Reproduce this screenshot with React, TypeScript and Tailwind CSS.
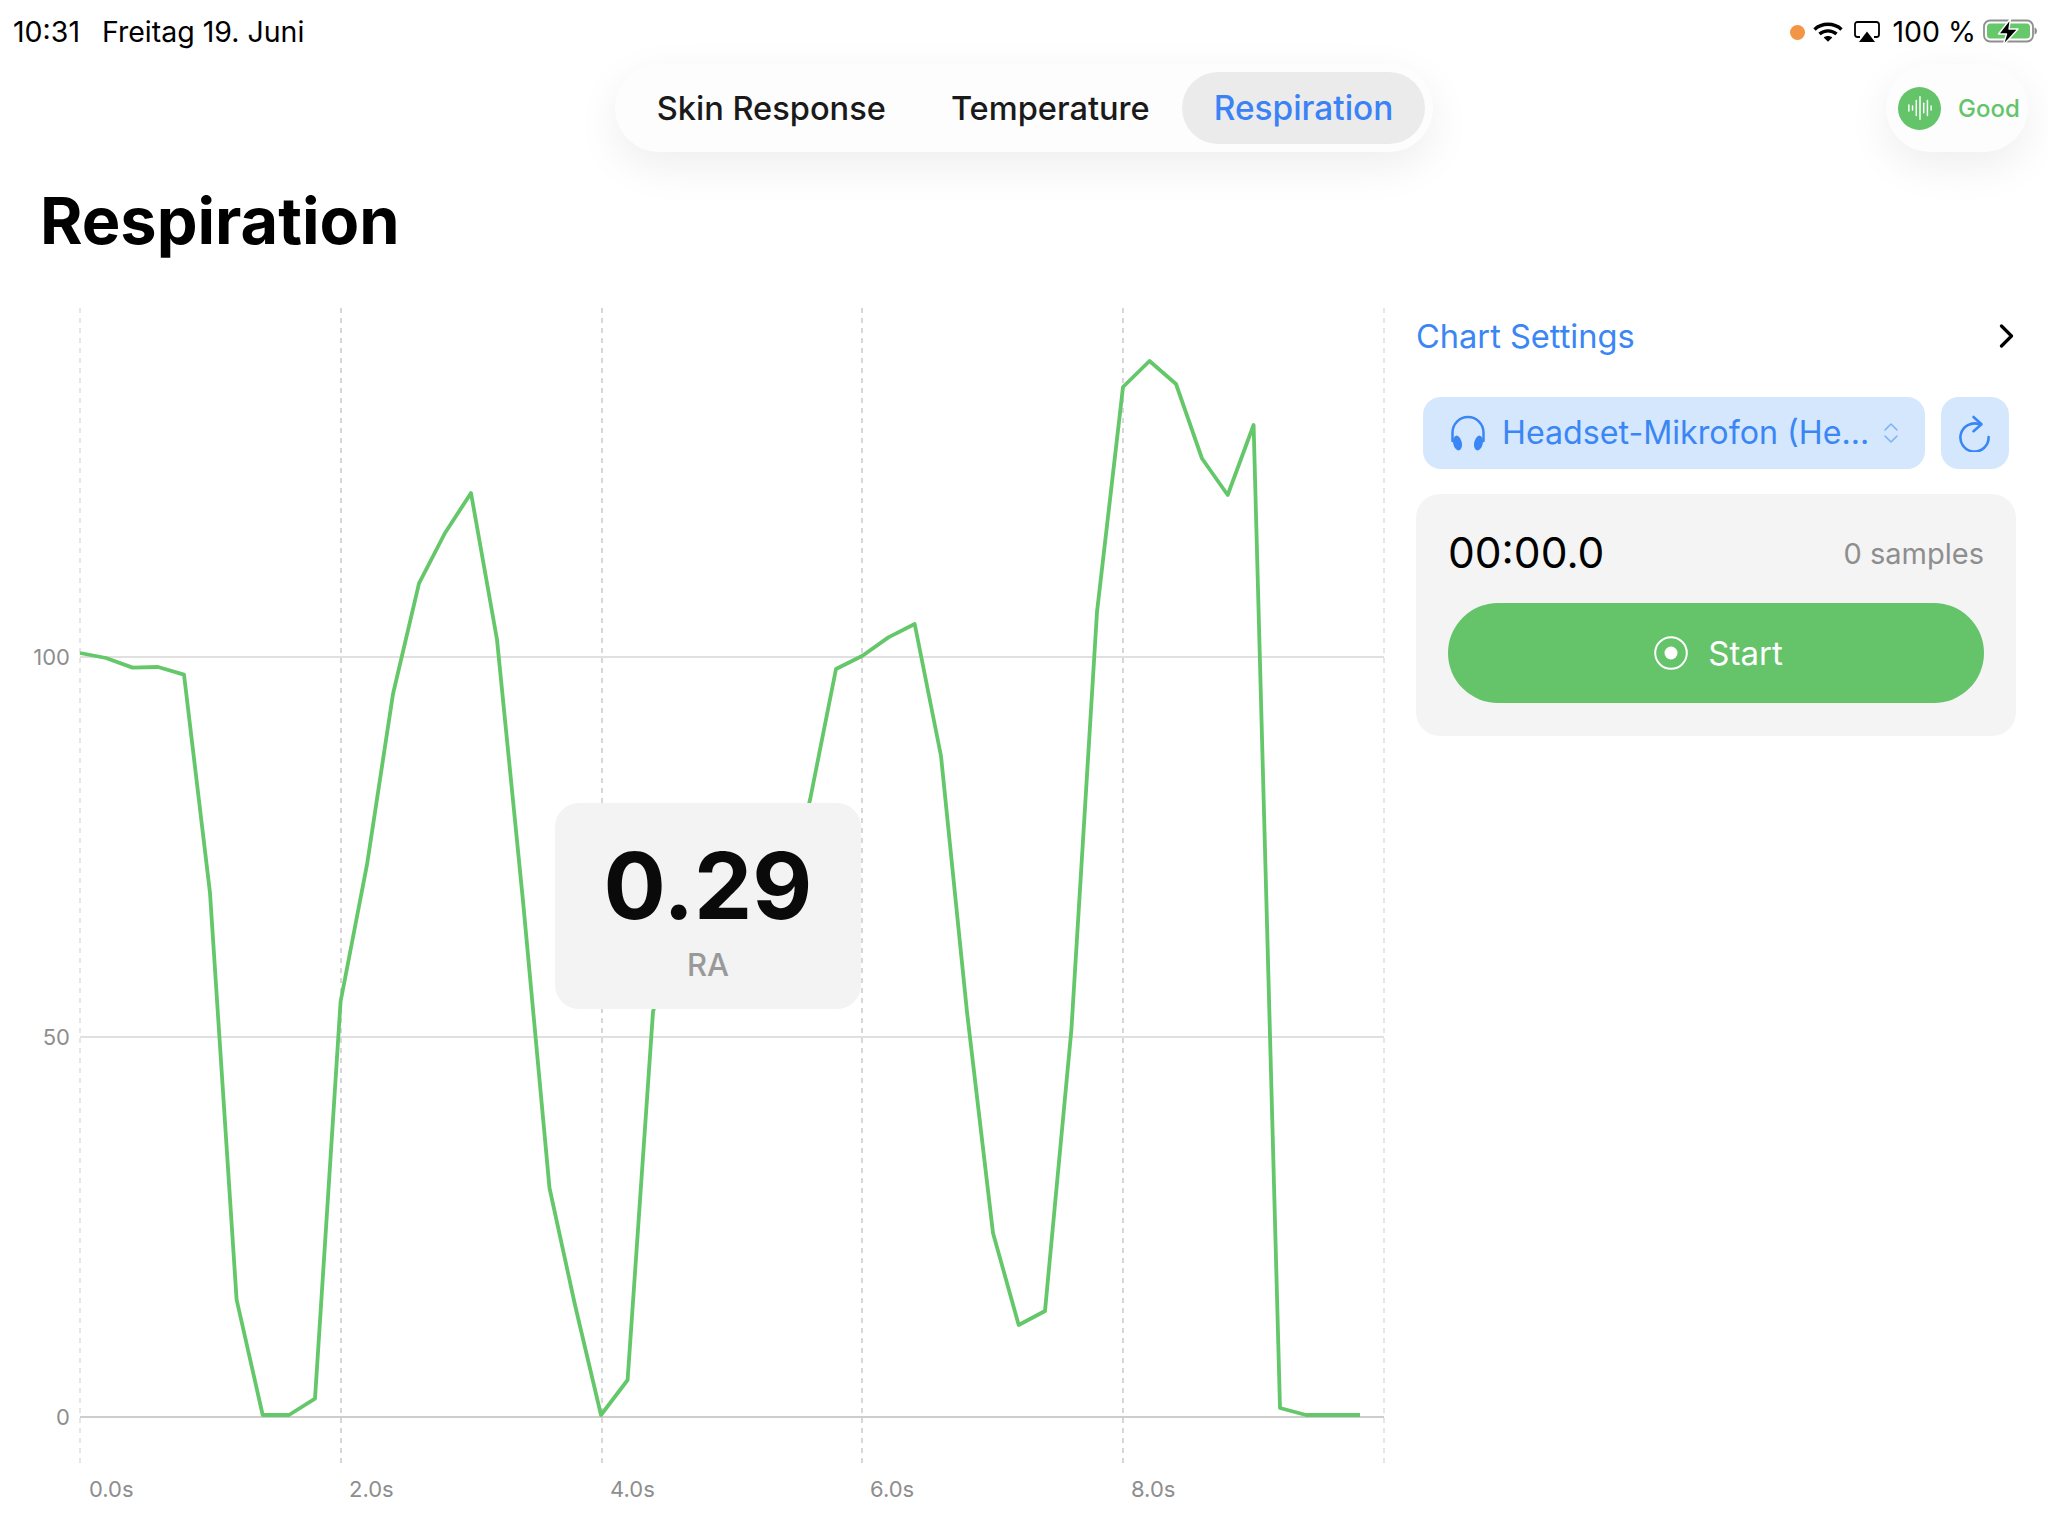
import React from "react";

const points: [number, number][] = [
  [80, 653], [106, 658], [132.6, 667.6], [158, 667], [184, 674.6], [210, 893], [236.6, 1299.6], [262.7, 1415], [289, 1415], [315, 1398.7],
  [340.6, 1001.5], [367, 864.7], [393, 694], [419, 583.4], [445, 533], [471, 493], [497, 639.5], [523, 901], [549.5, 1188], [575, 1305],
  [601, 1415], [627.6, 1380], [653, 1012], [680, 900], [706, 900], [732, 900], [758, 900], [784, 900], [810, 800], [836, 669],
  [862.5, 655.7], [888.4, 637.4], [914.7, 624], [941, 756], [967, 1012], [993, 1233], [1018.7, 1325], [1045, 1311], [1071.4, 1029.6], [1097, 612],
  [1123, 387], [1149.5, 361], [1176, 384], [1202, 458.5], [1227.7, 495], [1253.6, 425], [1280, 1408], [1306, 1415], [1332, 1415], [1360, 1415],
];

const verticals = [
  { x: 80, c: "#e0e0e0" },
  { x: 341, c: "#cdcdcd" },
  { x: 602, c: "#cdcdcd" },
  { x: 862, c: "#cdcdcd" },
  { x: 1123, c: "#cdcdcd" },
  { x: 1384, c: "#e0e0e0" },
];

const xLabels = [
  { x: 89, t: "0.0s" },
  { x: 349, t: "2.0s" },
  { x: 610, t: "4.0s" },
  { x: 870, t: "6.0s" },
  { x: 1131, t: "8.0s" },
];

function Chart() {
  return (
    <svg viewBox="0 308 1416 1228" className="block w-[1416px] h-[1228px]">
      {verticals.map((v) => (
        <line key={v.x} x1={v.x} x2={v.x} y1={308} y2={1467} stroke={v.c} strokeWidth={1.6} strokeDasharray="5 5" />
      ))}
      <line x1={80} x2={1384} y1={657} y2={657} stroke="#d6d6d6" strokeWidth={1.4} />
      <line x1={80} x2={1384} y1={1037} y2={1037} stroke="#d6d6d6" strokeWidth={1.4} />
      <line x1={80} x2={1384} y1={1417} y2={1417} stroke="#bdbdbd" strokeWidth={1.4} />
      <text x={70} y={665} textAnchor="end" fill="#8e8e8e" fontSize={22}>100</text>
      <text x={70} y={1045} textAnchor="end" fill="#8e8e8e" fontSize={22}>50</text>
      <text x={70} y={1425} textAnchor="end" fill="#8e8e8e" fontSize={22}>0</text>
      {xLabels.map((l) => (
        <text key={l.x} x={l.x} y={1497} fill="#8e8e8e" fontSize={22}>{l.t}</text>
      ))}
      <polyline
        points={points.map((p) => p.join(",")).join(" ")}
        fill="none"
        stroke="#64c76a"
        strokeWidth={3.8}
        strokeLinejoin="round"
      />
    </svg>
  );
}

function Wifi() {
  return (
    <svg viewBox="0 0 30 20" className="w-[30px] h-[20px]" fill="none" stroke="#000" strokeLinecap="butt">
      <path d="M1.500 7.400C9 .6 21 .6 28.500 7.400" strokeWidth={3.4} />
      <path d="M6.500 12c4.800-4.200 12.200-4.200 17 0" strokeWidth={3.4} />
      <path d="M15 19.800l-4.300-4.400c2.500-2 6.100-2 8.600 0z" fill="#000" stroke="none" />
    </svg>
  );
}

function Airplay() {
  return (
    <svg viewBox="0 0 26 22" className="w-[26px] h-[22px]" fill="none">
      <path d="M6 16H3.500A2.500 2.500 0 0 1 1 13.500v-10A2.500 2.500 0 0 1 3.500 1h19A2.500 2.500 0 0 1 25 3.500v10a2.500 2.500 0 0 1-2.500 2.500H20" stroke="#000" strokeWidth={1.8} />
      <path d="M13 10.500L21 21H5z" fill="#000" />
    </svg>
  );
}

function Battery() {
  return (
    <svg viewBox="0 0 56 28" className="w-[56px] h-[28px]" fill="none">
      <rect x="2" y="2.500" width="49" height="21" rx="6" stroke="#8f8f8f" strokeWidth={1.800} />
      <rect x="5" y="5.500" width="43" height="15" rx="3.500" fill="#66c76b" />
      <path d="M52.500 9.500c1.800.5 2.500 2 2.500 3.500s-.7 3-2.500 3.500z" fill="#8f8f8f" />
      <path d="M28.500 .8L16.500 16h8L21 27.500 36 11h-9z" fill="#000" stroke="#fff" strokeWidth={1.400} strokeLinejoin="round" />
    </svg>
  );
}

function Waveform() {
  const bars: [number, number][] = [[2, 8], [6, 6], [10, 18], [14, 26], [18, 12], [22, 18], [26, 6]];
  return (
    <svg viewBox="0 0 28 28" className="w-[26px] h-[26px]">
      {bars.map(([x, h]) => (
        <rect key={x} x={x - 0.8} y={14 - h / 2} width={1.6} height={h} rx={0.8} fill="#fff" />
      ))}
    </svg>
  );
}

function Headphones() {
  return (
    <svg viewBox="0 0 36 36" className="w-[36px] h-[36px]" fill="none">
      <path d="M2.500 26V17.500a15.500 15.500 0 0 1 31 0V26" stroke="#3a86f5" strokeWidth={2.500} strokeLinecap="round" />
      <ellipse cx="7.500" cy="28" rx="4.300" ry="7.500" transform="rotate(-12 7.500 28)" fill="#3a86f5" />
      <ellipse cx="28.500" cy="28" rx="4.300" ry="7.500" transform="rotate(12 28.500 28)" fill="#3a86f5" />
    </svg>
  );
}

function UpDown() {
  return (
    <svg viewBox="0 0 16 22" className="w-[16px] h-[22px]" fill="none" stroke="#7fb2f8" strokeWidth={1.600} strokeLinecap="round" strokeLinejoin="round">
      <path d="M2 8l6-6 6 6" />
      <path d="M2 14l6 6 6-6" />
    </svg>
  );
}

function Refresh() {
  return (
    <svg viewBox="0 0 32 38" className="w-[32px] h-[38px]" fill="none" stroke="#3a86f5" strokeWidth={2.600} strokeLinecap="round" strokeLinejoin="round">
      <path d="M20.500 10.300A14.100 14.100 0 1 0 29.600 23" />
      <path d="M14.500 3l8 7.200-8 7" />
    </svg>
  );
}

function Chevron() {
  return (
    <svg viewBox="0 0 15 24" className="w-[15px] h-[24px]" fill="none" stroke="#000" strokeWidth={3.200} strokeLinecap="round" strokeLinejoin="round">
      <path d="M2.500 2l10 10-10 10" />
    </svg>
  );
}

function RecordIcon() {
  return (
    <svg viewBox="0 0 34 34" className="w-[34px] h-[34px]" fill="none">
      <circle cx="17" cy="17" r="15.800" stroke="#fff" strokeWidth={2} />
      <circle cx="17" cy="17" r="6.500" fill="#fff" />
    </svg>
  );
}

export default function App() {
  return (
    <div className="relative flex h-[1536px] w-[2048px] flex-col overflow-hidden bg-white font-['Inter',sans-serif] text-black">
      {/* Status bar */}
      <div className="flex h-[64px] items-start justify-between pl-[13px] pr-[10px] pt-[14px]">
        <div className="flex gap-[22px] text-[28.5px] leading-[36px]">
          <span>10:31</span>
          <span>Freitag 19. Juni</span>
        </div>
        <div className="flex items-center">
          <span className="h-[15px] w-[15px] rounded-full bg-[#f29544]" />
          <span className="ml-[8px]"><Wifi /></span>
          <span className="ml-[11px]"><Airplay /></span>
          <span className="ml-[12px] text-[28.5px] leading-[36px]">100 %</span>
          <span className="ml-[6px]"><Battery /></span>
        </div>
      </div>

      {/* Navigation row */}
      <div className="grid h-[88px] grid-cols-[1fr_auto_1fr] items-center">
        <div />
        <div className="flex h-[88px] items-center rounded-[44px] bg-[#fdfdfd] pl-[42px] pr-[8px] shadow-[0_14px_44px_rgba(0,0,0,0.07)]">
          <span className="text-[32.6px] font-medium text-[#1a1a1a]">Skin Response</span>
          <span className="ml-[65px] text-[32.6px] font-medium text-[#1a1a1a]">Temperature</span>
          <span className="ml-[32px] flex h-[72px] items-center rounded-[36px] bg-[#ebebeb] px-[32px] text-[33.4px] font-medium text-[#3a82f6]">Respiration</span>
        </div>
        <div className="flex justify-end pr-[20px]">
          <div className="flex h-[88px] w-[142px] items-center gap-[17px] rounded-[44px] bg-[#fdfdfd] pl-[12px] shadow-[0_14px_44px_rgba(0,0,0,0.07)]">
            <span className="flex h-[43px] w-[43px] items-center justify-center rounded-full bg-[#64c46a]"><Waveform /></span>
            <span className="pt-[2px] text-[24px] font-medium text-[#64c46a]">Good</span>
          </div>
        </div>
      </div>

      {/* Title */}
      <div className="flex h-[156px] items-start pl-[40px] pt-[29px]">
        <h1 className="text-[64.8px] font-bold leading-[80px]">Respiration</h1>
      </div>

      {/* Content */}
      <div className="flex flex-1 items-start">
        <div className="relative h-[1228px] w-[1416px] shrink-0">
          <Chart />
          <div className="absolute left-[555px] top-[495px] flex h-[206px] w-[306px] flex-col items-center rounded-[24px] bg-[#f2f3f2] pt-[24px]">
            <span className="text-[92.5px] font-bold leading-[116px] text-[#0a0a0a]">0.29</span>
            <span className="mt-[2px] text-[31px] font-medium leading-[40px] text-[#999999]">RA</span>
          </div>
        </div>

        <div className="flex w-[600px] shrink-0 flex-col">
          <div className="flex h-[56px] items-center justify-between pr-[2px]">
            <span className="text-[32.6px] text-[#3a86f5]">Chart Settings</span>
            <Chevron />
          </div>
          <div className="mt-[33px] flex h-[72px] items-center gap-[16px] pl-[7px]">
            <div className="flex h-[72px] w-[502px] items-center rounded-[18px] bg-[#d5e7fd] pl-[27px]">
              <Headphones />
              <span className="ml-[16px] text-[32.2px] text-[#3a86f5]">Headset-Mikrofon (He...</span>
              <span className="ml-[14px]"><UpDown /></span>
            </div>
            <div className="flex h-[72px] w-[68px] items-center justify-center rounded-[18px] bg-[#d5e7fd]"><Refresh /></div>
          </div>
          <div className="mt-[25px] flex h-[242px] flex-col rounded-[24px] bg-[#f4f4f4] px-[32px] pt-[34px]">
            <div className="flex h-[50px] items-center justify-between">
              <span className="text-[42.5px]">00:00.0</span>
              <span className="pt-[2px] text-[29px] text-[#8e8e8e]">0 samples</span>
            </div>
            <div className="mt-[25px] flex h-[100px] items-center justify-center gap-[20px] rounded-[50px] bg-[#65c46a] pl-[5px]">
              <RecordIcon />
              <span className="pt-[1px] text-[33px] text-white">Start</span>
            </div>
          </div>
        </div>
      </div>
    </div>
  );
}
